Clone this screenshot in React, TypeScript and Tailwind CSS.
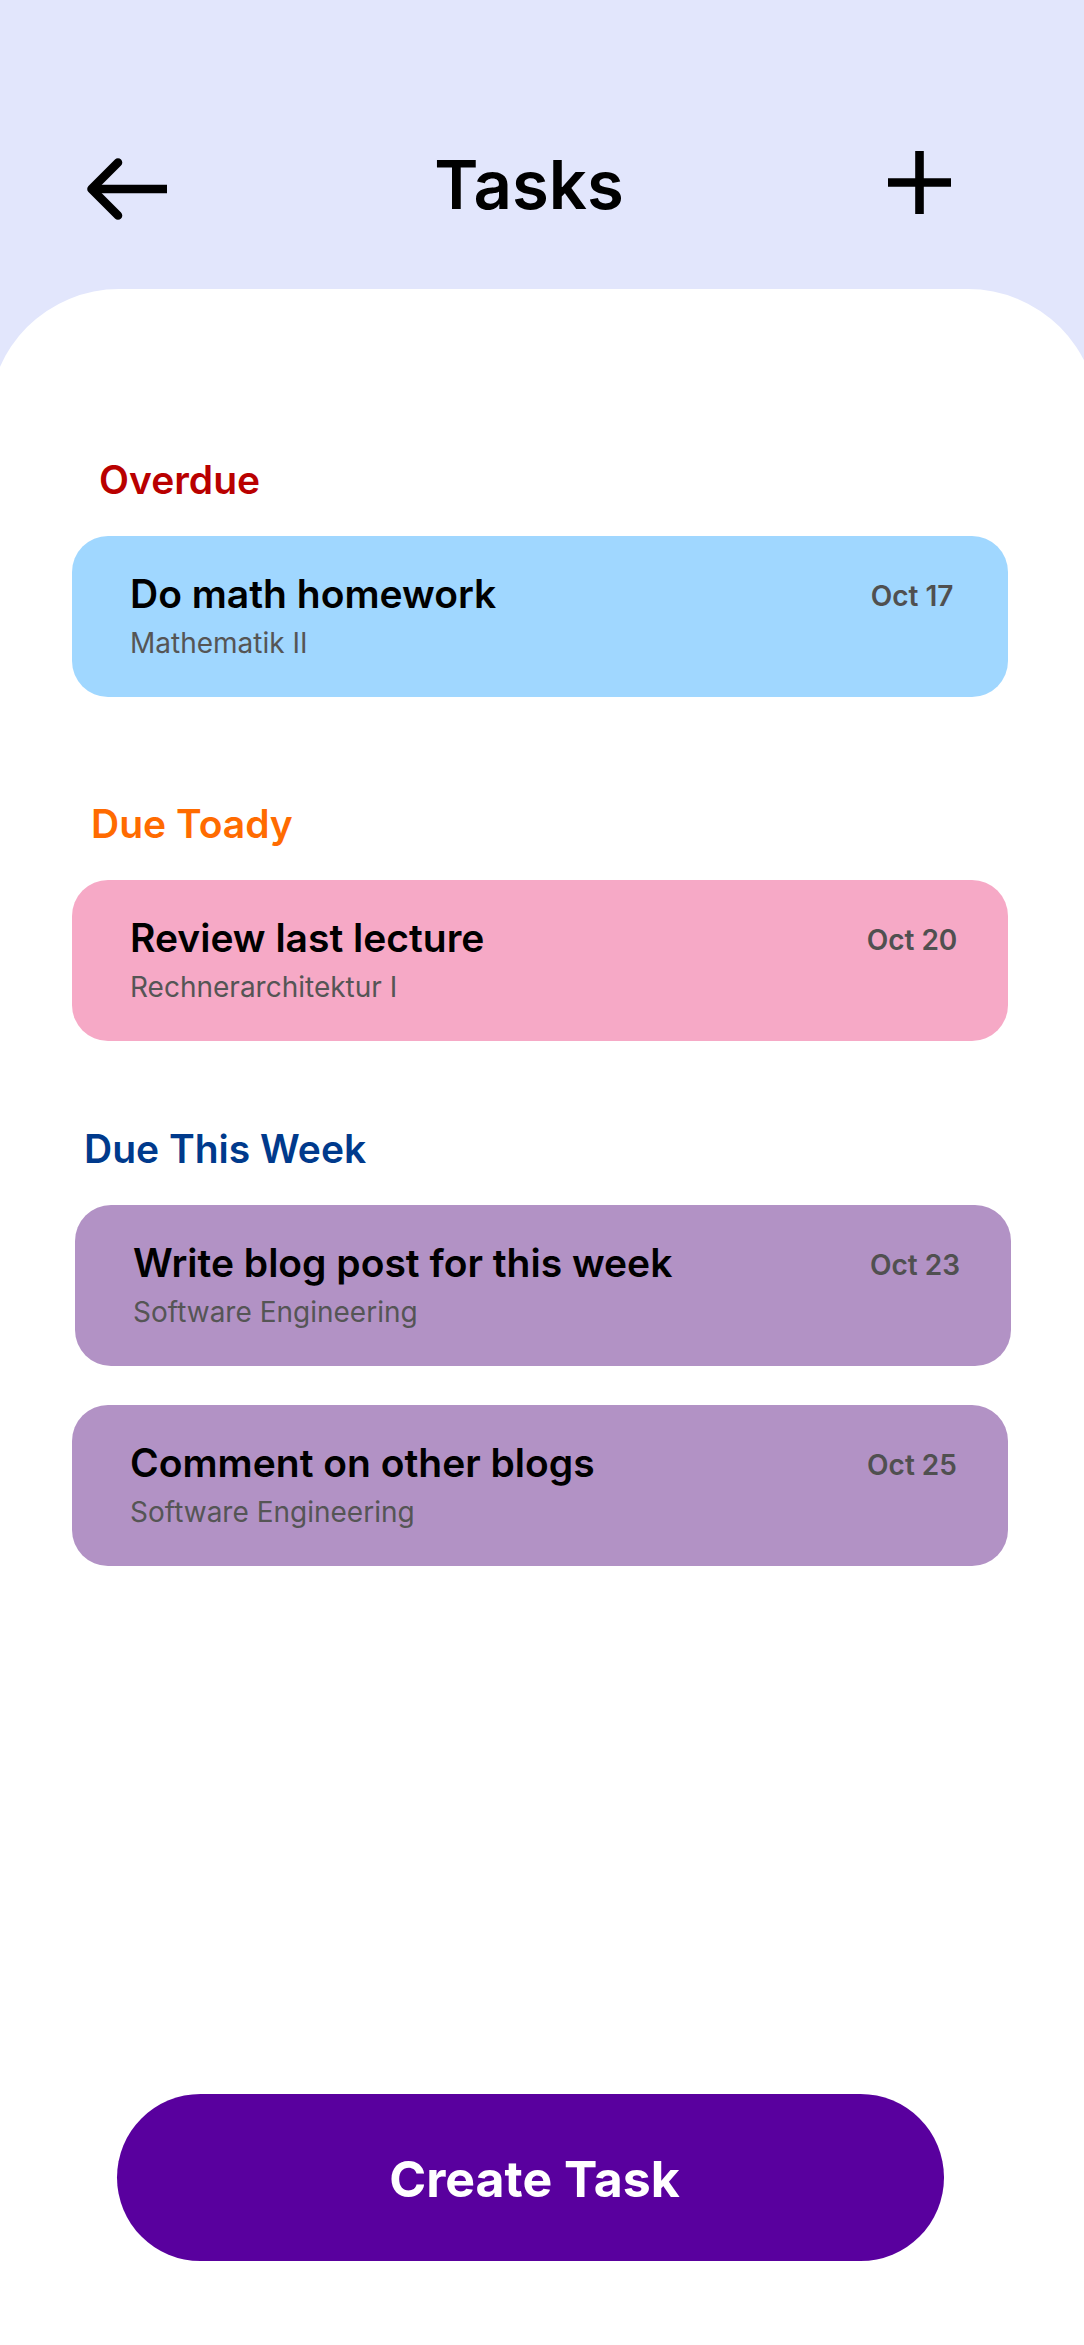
type Task = { title: string; course: string; date: string };

function TaskCard({ task, color, className = '' }: { task: Task; color: string; className?: string }) {
  return (
    <li className={`flex min-h-[161px] items-start justify-between rounded-[36px] pt-[35px] pr-[50px] pl-[58px] ${color} ${className}`}>
      <div>
        <h3 className="text-[39px] leading-[46px] font-semibold text-black">{task.title}</h3>
        <p className="mt-[9px] text-[28px] leading-[34px] text-[#555555]">{task.course}</p>
      </div>
      <time className="mt-2 w-[92px] text-center text-[28px] leading-[34px] font-semibold whitespace-nowrap text-[#505050]">
        {task.date}
      </time>
    </li>
  );
}

export default function App() {
  return (
    <div className="flex min-h-screen flex-col overflow-hidden bg-[#e2e6fc] font-['Inter',sans-serif]">
      <header className="flex h-[289px] shrink-0 items-start justify-between pt-[144px] pr-[133px] pl-[87px]">
        <button aria-label="Back" className="mt-[14px]">
          <svg width="80" height="62" viewBox="0 0 80 62" fill="none" stroke="black" strokeWidth="8.6">
            <path d="M80 31H5" />
            <path d="M31 4.5L4.5 31L31 57.5" strokeLinecap="round" strokeLinejoin="round" />
          </svg>
        </button>
        <h1 className="pl-[3px] text-[67px] leading-[82px] font-semibold">Tasks</h1>
        <button aria-label="Add task" className="mt-[7px]">
          <svg width="63" height="63" viewBox="0 0 63 63" fill="none" stroke="black" strokeWidth="8.6">
            <path d="M0 31.5H63M31.5 0V63" />
          </svg>
        </button>
      </header>
      <main className="-mr-[14px] -ml-[11px] flex grow flex-col rounded-t-[130px] bg-white pt-[168px] pr-[90px] pb-[84px] pl-[83px]">
        <section>
          <h2 className="pl-[27px] text-[39px] leading-[46px] font-semibold text-[#b90000]">Overdue</h2>
          <ul className="mt-[33px]">
            <TaskCard color="bg-[#a0d7ff]" task={{ title: 'Do math homework', course: 'Mathematik II', date: 'Oct 17' }} />
          </ul>
        </section>
        <section className="mt-[104px]">
          <h2 className="pl-[19px] text-[39px] leading-[46px] font-semibold text-[#ff6b00]">Due Toady</h2>
          <ul className="mt-[33px]">
            <TaskCard color="bg-[#f6a9c6]" task={{ title: 'Review last lecture', course: 'Rechnerarchitektur I', date: 'Oct 20' }} />
          </ul>
        </section>
        <section className="mt-[85px]">
          <h2 className="pl-[12px] text-[39px] leading-[46px] font-semibold text-[#003a8c]">Due This Week</h2>
          <ul className="mt-[33px] flex flex-col gap-[39px]">
            <TaskCard
              color="bg-[#b292c5]"
              className="-mr-[3px] ml-[3px]"
              task={{ title: 'Write blog post for this week', course: 'Software Engineering', date: 'Oct 23' }}
            />
            <TaskCard color="bg-[#b292c5]" task={{ title: 'Comment on other blogs', course: 'Software Engineering', date: 'Oct 25' }} />
          </ul>
        </section>
        <button className="mt-auto mr-[64px] ml-[45px] h-[167px] rounded-full bg-[#59009e] pt-[2px] pl-2 text-[50px] leading-[60px] font-bold text-white">
          Create Task
        </button>
      </main>
    </div>
  );
}
